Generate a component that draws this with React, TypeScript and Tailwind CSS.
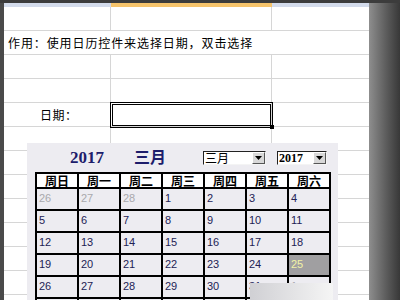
import React from "react";

const CJK = { fontFamily: '"Noto Sans CJK SC", "Noto Sans", sans-serif' };
const SERIF = { fontFamily: '"Liberation Serif", "Noto Sans CJK SC", serif' };
const SANS = { fontFamily: '"Liberation Sans", sans-serif' };

type Cell = { n: number | null; g?: boolean; sel?: boolean };

const weeks: Cell[][] = [
  [{ n: 26, g: true }, { n: 27, g: true }, { n: 28, g: true }, { n: 1 }, { n: 2 }, { n: 3 }, { n: 4 }],
  [{ n: 5 }, { n: 6 }, { n: 7 }, { n: 8 }, { n: 9 }, { n: 10 }, { n: 11 }],
  [{ n: 12 }, { n: 13 }, { n: 14 }, { n: 15 }, { n: 16 }, { n: 17 }, { n: 18 }],
  [{ n: 19 }, { n: 20 }, { n: 21 }, { n: 22 }, { n: 23 }, { n: 24 }, { n: 25, sel: true }],
  [{ n: 26 }, { n: 27 }, { n: 28 }, { n: 29 }, { n: 30 }, { n: 31 }, { n: 1, g: true }],
  [{ n: null }, { n: null }, { n: null }, { n: null }, { n: null }, { n: null }, { n: null }],
];

const heads = ["周日", "周一", "周二", "周三", "周四", "周五", "周六"];

function ArrowBtn() {
  return (
    <div className="w-[13px] h-full bg-[#d8d8d8] border border-t-white border-l-white border-r-[#555] border-b-[#555] flex items-center justify-center">
      <svg width="7" height="4" viewBox="0 0 7 4">
        <path d="M0 0 H7 L3.5 4 Z" fill="#000" />
      </svg>
    </div>
  );
}

function Row({ children, plain }: { children?: React.ReactNode; plain?: boolean }) {
  return (
    <div className="h-[24px] shrink-0 flex border-b border-[#d6d6d6]">
      {plain ? (
        children
      ) : (
        <>
          <div className="w-[107px] border-r border-[#d6d6d6]" />
          <div className="w-[161px] border-r border-[#d6d6d6]" />
          <div className="flex-1" />
        </>
      )}
    </div>
  );
}

export default function App() {
  return (
    <div className="relative w-[400px] h-[300px] overflow-hidden bg-white flex flex-col">
      <div className="h-[3px] shrink-0 bg-[#3c3c3c]" />
      <div className="flex flex-1 min-h-0">
        <div className="w-[4px] shrink-0 bg-[#4a4a4a]" />
        <div className="flex-1 flex flex-col min-w-0 overflow-hidden">
          {/* column header strip */}
          <div className="h-[4px] shrink-0 flex">
            <div className="w-[107px] bg-[#d3dbeb]" />
            <div className="w-[161px] bg-[#f6c46c]" />
            <div className="flex-1 bg-[#d3dbeb]" />
          </div>
          <Row />
          <Row plain>
            <div className="flex items-center pl-[4px] text-[12px] tracking-[0.9px] text-black whitespace-nowrap" style={CJK}>
              作用：使用日历控件来选择日期，双击选择
            </div>
          </Row>
          <Row />
          <Row />
          <Row plain>
            <div className="w-[107px] border-r border-[#d6d6d6] flex items-center pl-[36px] text-[12px] tracking-[0.5px] text-black" style={CJK}>
              日期：
            </div>
            <div className="w-[161px] border-r border-[#d6d6d6] relative">
              <div className="absolute -left-[1px] -top-[1px] w-[163px] h-[26px] border-[3px] border-double border-black" />
              <div className="absolute -right-[3px] -bottom-[3px] w-[4px] h-[4px] bg-black" />
            </div>
            <div className="flex-1" />
          </Row>
          <Row />
          <Row />
          <Row />
          <Row />
          <Row />
          <Row />
          <Row />
          <Row />
        </div>
        <div className="w-[31px] shrink-0 bg-linear-to-r from-[#8e8e8e] to-[#383838]" />
      </div>

      {/* calendar control */}
      <div className="absolute left-[27px] top-[143px] w-[311px] h-[170px] bg-[#edecf1] flex flex-col">
        <div className="h-[29px] shrink-0 flex items-center pl-[43px]">
          <span className="w-[64px] text-[17px] font-bold text-[#1d1d6b] leading-none" style={SERIF}>2017</span>
          <span className="w-[69px] text-[16px] font-bold text-[#1d1d6b] leading-none" style={SERIF}>三月</span>
          <div className="w-[63px] h-[14px] flex bg-white border border-t-[#222] border-l-[#222] border-r-[#f4f4f4] border-b-[#f4f4f4]">
            <span className="flex-1 text-[12px] leading-[12px] pl-[1px] text-black" style={CJK}>三月</span>
            <ArrowBtn />
          </div>
          <div className="w-[11px]" />
          <div className="w-[50px] h-[14px] flex bg-white border border-t-[#222] border-l-[#222] border-r-[#f4f4f4] border-b-[#f4f4f4]">
            <span className="flex-1 text-[12px] leading-[12px] pl-[1px] font-bold text-black" style={SERIF}>2017</span>
            <ArrowBtn />
          </div>
        </div>
        <div className="ml-[8px] w-fit grid grid-cols-[repeat(7,40px)] gap-[2px] p-[2px] bg-black">
          {heads.map((h) => (
            <div key={h} className="h-[13px] bg-white flex items-center justify-center text-[12px] leading-[13px] font-bold text-black" style={CJK}>
              {h}
            </div>
          ))}
          {weeks.flat().map((c, i) => (
            <div
              key={i}
              className={
                "h-[20px] pl-[2px] pt-[2px] text-[11px] leading-[14px] " +
                (c.sel ? "bg-[#a09fa1] text-[#f2f2a6]" : c.g ? "bg-[#edecf1] text-[#a9a9ad]" : "bg-[#edecf1] text-[#222255]")
              }
              style={SANS}
            >
              {c.n}
            </div>
          ))}
        </div>
      </div>

      {/* blurred overlay */}
      <div className="absolute left-[250px] top-[283px] w-[83px] h-[17px] bg-linear-to-r from-[#d0d0d4] to-[#f5f5f5]" />
    </div>
  );
}
